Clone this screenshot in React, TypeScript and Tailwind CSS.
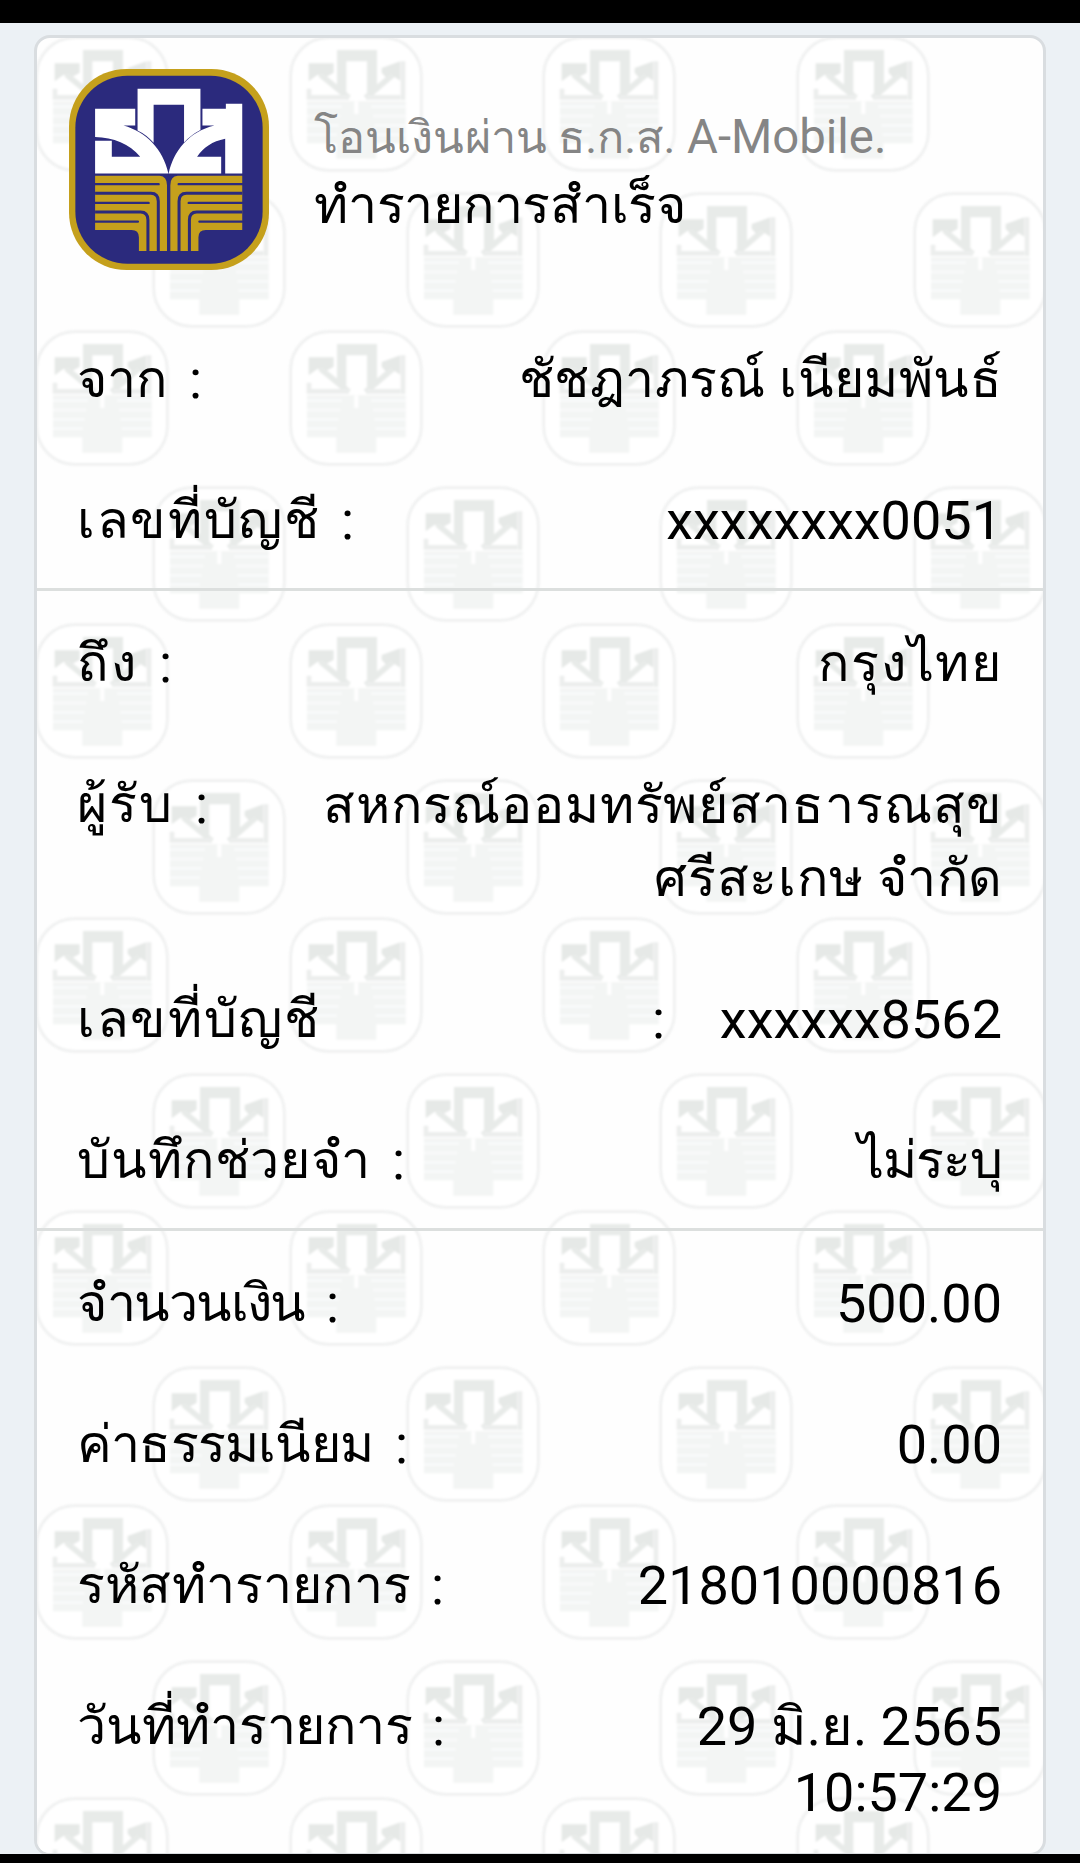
import type { ReactNode } from "react";

function Half({ line }: { line: string }) {
  return (
    <g>
      <path d="M105 348H298Q320 350 320 376V573H236V532Q236 510 214 510H105Z" fill="currentColor" />
      <g fill="none" stroke={line}>
        <path strokeWidth="9" d="M105 400H272Q294 400 294 424V573M105 456H241Q263 456 263 480V573" />
        <path strokeWidth="7" strokeLinecap="round" d="M105 373H295M105 429H265M105 485H233" />
      </g>
    </g>
  );
}

/* Bank logo: initials above an open book with striped pages */
function Logo() {
  return (
    <svg viewBox="27 28 598 602" preserveAspectRatio="none" className="h-[201px] w-[200px] shrink-0 text-[#c5a01c]">
      <rect x="27" y="28" width="598" height="602" rx="172" fill="currentColor" />
      <rect x="46" y="48" width="560" height="563" rx="156" fill="#2b2a7d" />
      <g fill="#ffffff">
        <path d="M232 87H420V211Q393 225 371 248V135H280V249Q258 224 232 212Z" />
        <path d="M105 147H225V197H190C258 216 308 268 324 340V341H105V243H155V291H240C208 253 160 233 105 232Z" />
        <path d="M426 147H496V132H545V341H494V237C455 245 430 262 410 291H482V341H325C339 275 385 215 462 197H426Z" />
      </g>
      <Half line="#2b2a7d" />
      <g transform="translate(650 0) scale(-1 1)">
        <Half line="#2b2a7d" />
      </g>
    </svg>
  );
}

/* Faint, simplified logo repeated behind the receipt */
function Mark() {
  return (
    <svg viewBox="6 6 402 408" preserveAspectRatio="none" className="h-[136px] w-[134px] shrink-0 blur-[1.2px]">
      <rect x="11" y="11" width="392" height="398" rx="114" fill="#ffffff" stroke="#eff0f0" strokeWidth="8" />
      <path d="M60 202H356V328H268V374H148V328H60Z" fill="#f3f5f4" />
      <path d="M60 218H165M60 246H160M60 274H155M60 302H150M356 218H252M356 246H258M356 274H262M356 302H266" stroke="#f9fafa" strokeWidth="8" />
      <path d="M208 202V240" stroke="#ffffff" strokeWidth="12" />
      <path d="M150 48H270V152L240 182V82H178V182L150 152Z" fill="#e8ebe9" />
      <path d="M65 88H140V116L112 132L92 122L65 142Z" fill="#e6e9e7" />
      <path d="M284 102L340 82V140L318 126L300 134L284 116Z" fill="#e6e9e7" />
      <path d="M100 122L186 192M318 122L236 192" stroke="#e8ebe9" strokeWidth="17" />
      <path d="M66 164V190H186M348 82V198M340 190H238" fill="none" stroke="#eceeed" strokeWidth="14" />
    </svg>
  );
}

function Watermark() {
  return (
    <div className="absolute inset-0 overflow-hidden rounded-[13px]">
      <div className="-mt-[2px] flex flex-col gap-[1.5px]">
        {[0, 1, 2, 3, 4, 5, 6].map((band) => (
          <div key={band} className="flex shrink-0 flex-col gap-[20px]">
            <div className="-ml-[2px] flex gap-[119.5px]">
              <Mark /><Mark /><Mark /><Mark />
            </div>
            <div className="ml-[115px] flex gap-[119.5px]">
              <Mark /><Mark /><Mark /><Mark />
            </div>
          </div>
        ))}
      </div>
    </div>
  );
}

function Row({ label, width, children }: { label: string; width: string; children: ReactNode }) {
  return (
    <div className="flex justify-between py-[34.5px] pr-[41px] pl-[40px] leading-[72px] whitespace-nowrap">
      <div className="flex text-[54px]">
        <span className={`${width} text-[52px]`}>{label}</span>
        <span>:</span>
      </div>
      <div className="text-right">{children}</div>
    </div>
  );
}

export default function App() {
  return (
    <div className="h-[1863px] w-[1080px] overflow-hidden border-t-[23px] border-b-[9px] border-black bg-[#ecf1f5] px-[34px] pt-[12px] font-['Roboto',sans-serif] text-black">
      <div className="relative h-[1821px] w-[1012px] rounded-[16px] border-[3px] border-[#d9dde0] bg-[#fefefe]">
        <Watermark />
        <div className="relative">
          <header className="flex h-[271px] gap-[45px] pt-[31px] pl-[32px] whitespace-nowrap">
            <Logo />
            <div className="pt-[33px]">
              <p className="text-[47.3px] leading-[70px] text-[#858585]">
                <span className="text-[45px] tracking-[0.1px]">โอนเงินผ่าน ธ.ก.ส.</span> A-Mobile.
              </p>
              <p className="-mt-[3px] text-[52px] leading-[72px] tracking-[-0.3px]">ทำรายการสำเร็จ</p>
            </div>
          </header>

          <section className="h-[282px] border-b-[3px] border-[#dcdfde]">
            <Row label="จาก" width="w-[112px]"><p className="text-[52px] tracking-[0.4px]">ชัชฎาภรณ์ เนียมพันธ์</p></Row>
            <Row label="เลขที่บัญชี" width="w-[264px] tracking-[1.7px]"><p className="text-[54px]">xxxxxxxx0051</p></Row>
          </section>

          <section className="h-[640px] border-b-[3px] border-[#dcdfde] pt-[2px]">
            <Row label="ถึง" width="w-[82px] tracking-[3px]"><p className="-mr-[1px] text-[52px] tracking-[1.8px]">กรุงไทย</p></Row>
            <Row label="ผู้รับ" width="w-[118px] tracking-[2.2px]">
              <p className="-mr-[1px] text-[52px] leading-[73px] tracking-[0.95px]">สหกรณ์ออมทรัพย์สาธารณสุข</p>
              <p className="-mr-[1px] text-[52px] leading-[73px] tracking-[0.7px]">ศรีสะเกษ จำกัด</p>
            </Row>
            <Row label="เลขที่บัญชี" width="w-[575px] tracking-[1.7px]"><p className="text-[54px]">xxxxxx8562</p></Row>
            <Row label="บันทึกช่วยจำ" width="w-[315px] tracking-[0.9px]"><p className="text-[52px] tracking-[-1px]">ไม่ระบุ</p></Row>
          </section>

          <section className="pt-[2px]">
            <Row label="จำนวนเงิน" width="w-[249px] tracking-[-1.6px]"><p className="text-[54px]">500.00</p></Row>
            <Row label="ค่าธรรมเนียม" width="w-[318px] tracking-[-0.8px]"><p className="text-[54px]">0.00</p></Row>
            <Row label="รหัสทำรายการ" width="w-[354px] tracking-[0.2px]"><p className="text-[54px]">218010000816</p></Row>
            <Row label="วันที่ทำรายการ" width="w-[355px] tracking-[-0.1px]">
              <p className="text-[54px]">29 มิ.ย. 2565</p>
              <p className="-mt-[3px] text-[54px] leading-[66px]">10:57:29</p>
            </Row>
          </section>
        </div>
      </div>
    </div>
  );
}
